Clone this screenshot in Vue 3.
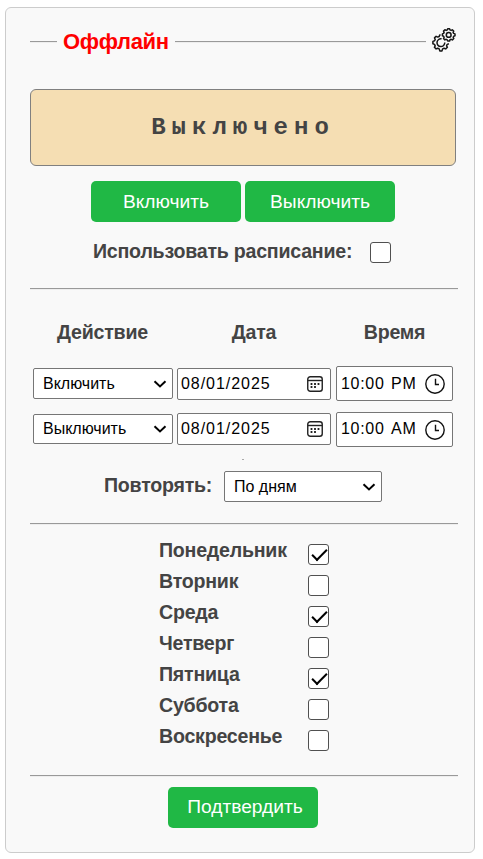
<script setup>
import { reactive, ref } from 'vue'

const useSchedule = ref(false)
const rows = reactive([
  { action: 'Включить', date: '08/01/2025', time: '10:00', half: 'PM' },
  { action: 'Выключить', date: '08/01/2025', time: '10:00', half: 'AM' },
])
const days = reactive([
  { name: 'Понедельник', on: true },
  { name: 'Вторник', on: false },
  { name: 'Среда', on: true },
  { name: 'Четверг', on: false },
  { name: 'Пятница', on: true },
  { name: 'Суббота', on: false },
  { name: 'Воскресенье', on: false },
])
</script>

<template>
  <main class="card">
    <header class="head">
      <span class="rule short"></span>
      <h1>Оффлайн</h1>
      <span class="rule long"></span>
      <svg class="gears" viewBox="0 0 24 24" fill="none" stroke="#151515" stroke-width="1.5" stroke-linejoin="round">
        <path d="M15.3 1.9 L15.7 .8 L17.6 .8 L18 1.9 L19.1 2.4 L20.3 1.8 L21.7 3.1 L21.1 4.4 L21.6 5.4 L23 5.9 L23 7.8 L21.7 8.2 L21.2 9.3 L21.8 10.5 L20.4 11.9 L19.2 11.3 L18 11.8 L17.6 13.1 L15.7 13.1 L15.2 11.8 L14.2 11.3 L12.9 11.9 L11.5 10.5 L12.1 9.3 L11.6 8.2 L10.4 7.8 L10.4 5.9 L11.6 5.4 L12.1 4.4 L11.5 3.1 L12.9 1.8 L14.2 2.4Z" />
        <circle cx="16.7" cy="6.9" r="2.4" />
        <path d="M8.6 7 L7.7 7 L7.2 8.5 L5.7 9.1 L4.1 8.3 L2.5 9.9 L3.2 11.5 L2.6 12.8 L.9 13.4 L.9 15.8 L2.5 16.4 L3.2 17.8 L2.4 19.3 L4.1 20.9 L5.7 20.2 L7.2 20.9 L7.8 22.9 L10 22.9 L10.6 20.9 L12.1 20.2 L13.7 20.9 L15.4 19.3 L14.6 17.8 L15.2 16.4 L16.9 15.8" />
        <path d="M9.6 10.8 A3.9 3.9 0 1 0 12.8 14.6" />
      </svg>
    </header>

    <div class="status">Выключено</div>

    <div class="switches">
      <button class="btn">Включить</button>
      <button class="btn">Выключить</button>
    </div>

    <label class="use">
      <span>Использовать расписание:</span>
      <input v-model="useSchedule" class="check" type="checkbox" />
    </label>

    <hr />

    <section class="schedule">
      <div class="titles">
        <span>Действие</span><span>Дата</span><span>Время</span>
      </div>
      <div v-for="row in rows" :key="row.action" class="line">
        <div class="field select">
          <span>{{ row.action }}</span>
          <svg class="chevron" viewBox="0 0 14 8"><path d="M1.5 1.2 L7 6.4 L12.5 1.2" /></svg>
        </div>
        <div class="field date">
          <span>{{ row.date }}</span>
          <svg class="calendar" viewBox="0 0 16 16">
            <rect x=".75" y=".75" width="14.5" height="14.5" rx="2.5" />
            <path d="M1 4.5H15" />
            <path class="dots" d="M3.6 8h1.8M7.1 8h1.8M10.6 8h1.8M3.6 11h1.8M7.1 11h1.8" />
          </svg>
        </div>
        <div class="field time">
          <span class="clocktext">{{ row.time }}</span><span class="half">{{ row.half }}</span>
          <svg class="clock" viewBox="0 0 20 20">
            <circle cx="10" cy="10" r="9.2" /><path d="M10.5 4.8V10.5H14" />
          </svg>
        </div>
      </div>
      <div class="dot"></div>
      <div class="repeat">
        <span class="repeat-label">Повторять:</span>
        <div class="field select">
          <span>По дням</span>
          <svg class="chevron" viewBox="0 0 14 8"><path d="M1.5 1.2 L7 6.4 L12.5 1.2" /></svg>
        </div>
      </div>
    </section>

    <hr />

    <section class="days">
      <label v-for="day in days" :key="day.name" class="day">
        <span>{{ day.name }}</span>
        <input v-model="day.on" class="check" type="checkbox" />
      </label>
    </section>

    <hr />
    <button class="btn confirm">Подтвердить</button>
  </main>
</template>

<style>
body {
  background: #fff;
}
</style>

<style scoped>
* {
  box-sizing: border-box;
}
.card {
  width: 470px;
  height: 846px;
  margin: 7px 0 0 5px;
  padding: 20px 17px 0 24px;
  border: 1px solid #ccc;
  border-radius: 6px;
  background: #f9f9f9;
  color: #444;
  font: bold 19.6px/22px "Liberation Sans", Arial, sans-serif;
  letter-spacing: -0.23px;
  display: flow-root;
}
.head {
  display: flex;
  align-items: center;
  height: 24px;
}
h1 {
  width: 106px;
  margin: 3px 6px 0;
  color: #f00;
  font-size: 22px;
  line-height: 26px;
  letter-spacing: -0.35px;
  white-space: nowrap;
}
.rule {
  height: 2px;
  margin-top: 4px;
  border-top: 1px solid #9a9a9a;
  border-bottom: 1px solid #eee;
}
.short {
  width: 27px;
}
.long {
  width: 251px;
}
.gears {
  width: 24px;
  height: 24px;
  margin-left: 6px;
}
.status {
  width: 426px;
  height: 77px;
  margin-top: 37px;
  border: 1px solid gray;
  border-radius: 6px;
  background: #f5deb3;
  font: bold 24px/75px "Courier New", "Liberation Mono", monospace;
  letter-spacing: 6px;
  text-align: center;
}
.switches {
  display: flex;
  gap: 4px;
  margin: 15px 0 0 61px;
}
.btn {
  width: 150px;
  height: 41px;
  padding: 0;
  border: 0;
  border-radius: 5px;
  background: #20b845;
  color: #fff;
  font: 19.2px/41px "Liberation Sans", Arial, sans-serif;
  letter-spacing: 0;
}
.use {
  display: flex;
  align-items: center;
  height: 22px;
  margin: 19px 0 0 63px;
}
.use span {
  width: 277px;
  margin-top: -2px;
  white-space: nowrap;
}
.check {
  appearance: none;
  flex: none;
  width: 21px;
  height: 21px;
  margin: 0;
  border: 1px solid #505050;
  border-radius: 3px;
  background: #fff;
}
.check:checked::after {
  content: "";
  box-sizing: border-box;
  display: block;
  width: 15px;
  height: 8px;
  margin: 4px 0 0 3px;
  border: solid #000;
  border-width: 0 0 2px 2px;
  transform: rotate(-45deg);
}
hr {
  width: 428px;
  height: 2px;
  margin: 25px 0 0;
  border: 0;
  border-top: 1px solid #999;
  border-bottom: 1px solid #eee;
}
.titles {
  display: grid;
  grid-template-columns: 145px 158px 123px;
  height: 45px;
  margin-top: 31px;
  text-align: center;
}
.line {
  display: flex;
  align-items: center;
  height: 35px;
  margin: 0 0 11px 3px;
}
.field {
  display: flex;
  align-items: center;
  border: 1px solid #767676;
  border-radius: 2px;
  background: #fff;
  color: #000;
  font-size: 16px;
  font-weight: normal;
  letter-spacing: 0;
  white-space: nowrap;
}
.select {
  width: 140px;
  height: 31px;
  padding: 0 5px 0 9px;
  justify-content: space-between;
}
.chevron {
  width: 14px;
  height: 8px;
  fill: none;
  stroke: #000;
  stroke-width: 2;
}
.date {
  width: 154px;
  height: 32px;
  margin: 0 5px 0 4px;
  padding: 0 7px 0 4px;
  justify-content: space-between;
  letter-spacing: 0.95px;
}
.date span {
  margin-left: -1px;
}
.line + .line .select {
  height: 30px;
  margin-bottom: 1px;
}
.line + .line .date {
  margin-bottom: 1px;
}
.calendar {
  width: 16px;
  height: 16px;
  fill: none;
  stroke: #222;
  stroke-width: 1.4;
}
.dots {
  stroke-width: 1.8;
}
.time {
  width: 117px;
  height: 35px;
  padding: 0 0 0 4px;
}
.line + .line .time span {
  margin-top: -2px;
}
.clocktext {
  width: 50px;
  letter-spacing: 0.7px;
}
.half {
  width: 26px;
  letter-spacing: 0.8px;
}
.clock {
  width: 20px;
  height: 20px;
  margin-left: 8px;
  fill: none;
  stroke: #111;
  stroke-width: 1.4;
}
.dot {
  width: 2px;
  height: 1px;
  margin: 12px 0 0 212px;
  background: #aaa;
}
.repeat {
  display: flex;
  align-items: center;
  height: 31px;
  margin: 11px 0 0 74px;
}
.repeat-label {
  width: 120px;
  margin-top: -3px;
}
.repeat .select {
  width: 158px;
}
.schedule + hr {
  margin-top: 21px;
}
.days {
  margin: 15px 0 0 129px;
}
.day {
  display: flex;
  align-items: flex-start;
  height: 31px;
}
.day span {
  width: 149px;
  margin-top: -1px;
}
.day .check {
  margin-top: 4px;
}
.days + hr {
  margin-top: 18px;
}
.confirm {
  display: block;
  margin: 10px 0 0 138px;
  padding: 0 0 2px 4px;
  line-height: 39px;
}
</style>
